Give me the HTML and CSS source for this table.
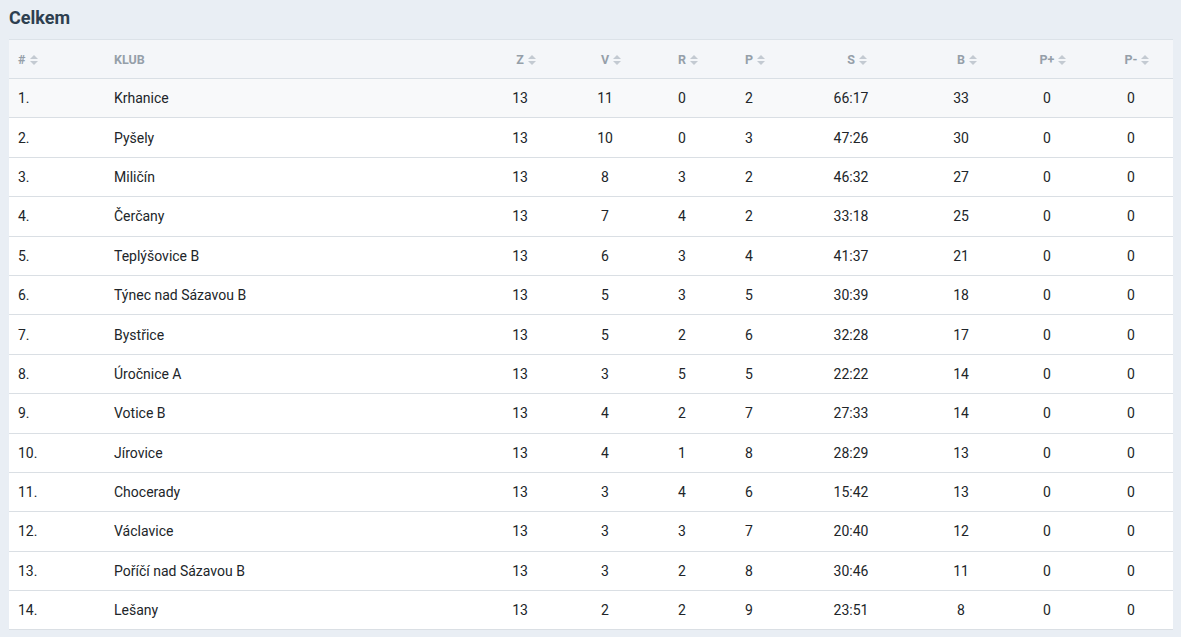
FILE: index.html
```html
<!DOCTYPE html>
<html lang="cs">
<head>
<meta charset="utf-8">
<title>Celkem</title>
<link rel="stylesheet" href="styles.css">
</head>
<body>
<div class="page">
  <h2 class="title">Celkem</h2>
  <table class="standings">
    <colgroup>
      <col class="c-rank"><col class="c-club"><col class="c-z"><col class="c-v"><col class="c-r"><col class="c-p"><col class="c-s"><col class="c-b"><col class="c-pp"><col class="c-pm">
    </colgroup>
    <thead>
      <tr>
        <th class="left"># <span class="sort"></span></th>
        <th class="left">KLUB</th>
        <th><span class="lbl">Z<span class="sort"></span></span></th>
        <th><span class="lbl">V<span class="sort"></span></span></th>
        <th><span class="lbl">R<span class="sort"></span></span></th>
        <th><span class="lbl">P<span class="sort"></span></span></th>
        <th><span class="lbl">S<span class="sort"></span></span></th>
        <th><span class="lbl">B<span class="sort"></span></span></th>
        <th><span class="lbl">P+<span class="sort"></span></span></th>
        <th><span class="lbl">P-<span class="sort"></span></span></th>
      </tr>
    </thead>
    <tbody>
      <tr class="first"><td class="left">1.</td><td class="left">Krhanice</td><td>13</td><td>11</td><td>0</td><td>2</td><td>66:17</td><td>33</td><td>0</td><td>0</td></tr>
      <tr><td class="left">2.</td><td class="left">Pyšely</td><td>13</td><td>10</td><td>0</td><td>3</td><td>47:26</td><td>30</td><td>0</td><td>0</td></tr>
      <tr><td class="left">3.</td><td class="left">Miličín</td><td>13</td><td>8</td><td>3</td><td>2</td><td>46:32</td><td>27</td><td>0</td><td>0</td></tr>
      <tr><td class="left">4.</td><td class="left">Čerčany</td><td>13</td><td>7</td><td>4</td><td>2</td><td>33:18</td><td>25</td><td>0</td><td>0</td></tr>
      <tr><td class="left">5.</td><td class="left">Teplýšovice B</td><td>13</td><td>6</td><td>3</td><td>4</td><td>41:37</td><td>21</td><td>0</td><td>0</td></tr>
      <tr><td class="left">6.</td><td class="left">Týnec nad Sázavou B</td><td>13</td><td>5</td><td>3</td><td>5</td><td>30:39</td><td>18</td><td>0</td><td>0</td></tr>
      <tr><td class="left">7.</td><td class="left">Bystřice</td><td>13</td><td>5</td><td>2</td><td>6</td><td>32:28</td><td>17</td><td>0</td><td>0</td></tr>
      <tr><td class="left">8.</td><td class="left">Úročnice A</td><td>13</td><td>3</td><td>5</td><td>5</td><td>22:22</td><td>14</td><td>0</td><td>0</td></tr>
      <tr><td class="left">9.</td><td class="left">Votice B</td><td>13</td><td>4</td><td>2</td><td>7</td><td>27:33</td><td>14</td><td>0</td><td>0</td></tr>
      <tr><td class="left">10.</td><td class="left">Jírovice</td><td>13</td><td>4</td><td>1</td><td>8</td><td>28:29</td><td>13</td><td>0</td><td>0</td></tr>
      <tr><td class="left">11.</td><td class="left">Chocerady</td><td>13</td><td>3</td><td>4</td><td>6</td><td>15:42</td><td>13</td><td>0</td><td>0</td></tr>
      <tr><td class="left">12.</td><td class="left">Václavice</td><td>13</td><td>3</td><td>3</td><td>7</td><td>20:40</td><td>12</td><td>0</td><td>0</td></tr>
      <tr><td class="left">13.</td><td class="left">Poříčí nad Sázavou B</td><td>13</td><td>3</td><td>2</td><td>8</td><td>30:46</td><td>11</td><td>0</td><td>0</td></tr>
      <tr><td class="left">14.</td><td class="left">Lešany</td><td>13</td><td>2</td><td>2</td><td>9</td><td>23:51</td><td>8</td><td>0</td><td>0</td></tr>
    </tbody>
  </table>
</div>
</body>
</html>
```

FILE: styles.css
```css
html, body {
  margin: 0;
  padding: 0;
  background: #e9eef4;
  font-family: Roboto, "Noto Sans", "Liberation Sans", sans-serif;
  color: #212529;
}

.page {
  padding: 8px 8px 0 9px;
}

.title {
  margin: 0 0 11px 0;
  font-size: 18px;
  line-height: 20px;
  font-weight: 700;
  color: #2e3f50;
}

.standings {
  width: 1164px;
  border-collapse: collapse;
  table-layout: fixed;
  background: #ffffff;
  font-size: 14px;
  border-top: 1px solid #dce2e8;
}

.c-rank { width: 96px; }
.c-club { width: 376px; }
.c-z { width: 78px; }
.c-v { width: 92px; }
.c-r { width: 62px; }
.c-p { width: 72px; }
.c-s { width: 132px; }
.c-b { width: 88px; }
.c-pp { width: 84px; }
.c-pm { width: 84px; }

.standings th {
  height: 38px;
  padding: 0 9px;
  background: #f4f6f9;
  color: #959fa9;
  font-size: 12.5px;
  font-weight: 700;
  text-align: center;
  border-bottom: 1px solid #d9dfe5;
}

.standings td {
  height: 38.4px;
  padding: 0 9px;
  text-align: center;
  border-bottom: 1px solid #dadfe4;
}

.standings .left {
  text-align: left;
}

.standings tr.first td {
  background: #f8f9fa;
}

.lbl {
  display: inline-block;
}

.sort {
  display: inline-block;
  position: relative;
  width: 8px;
  height: 10px;
  margin-left: 4px;
  margin-right: -12px;
  vertical-align: -1px;
}

th.left .sort {
  margin-right: 0;
  margin-left: 1px;
}

.sort::before,
.sort::after {
  content: "";
  position: absolute;
  left: 0;
  width: 0;
  height: 0;
  border-left: 4px solid transparent;
  border-right: 4px solid transparent;
}

.sort::before {
  top: 0;
  border-bottom: 4px solid #c3cad2;
}

.sort::after {
  bottom: 0;
  border-top: 4px solid #c3cad2;
}
```
